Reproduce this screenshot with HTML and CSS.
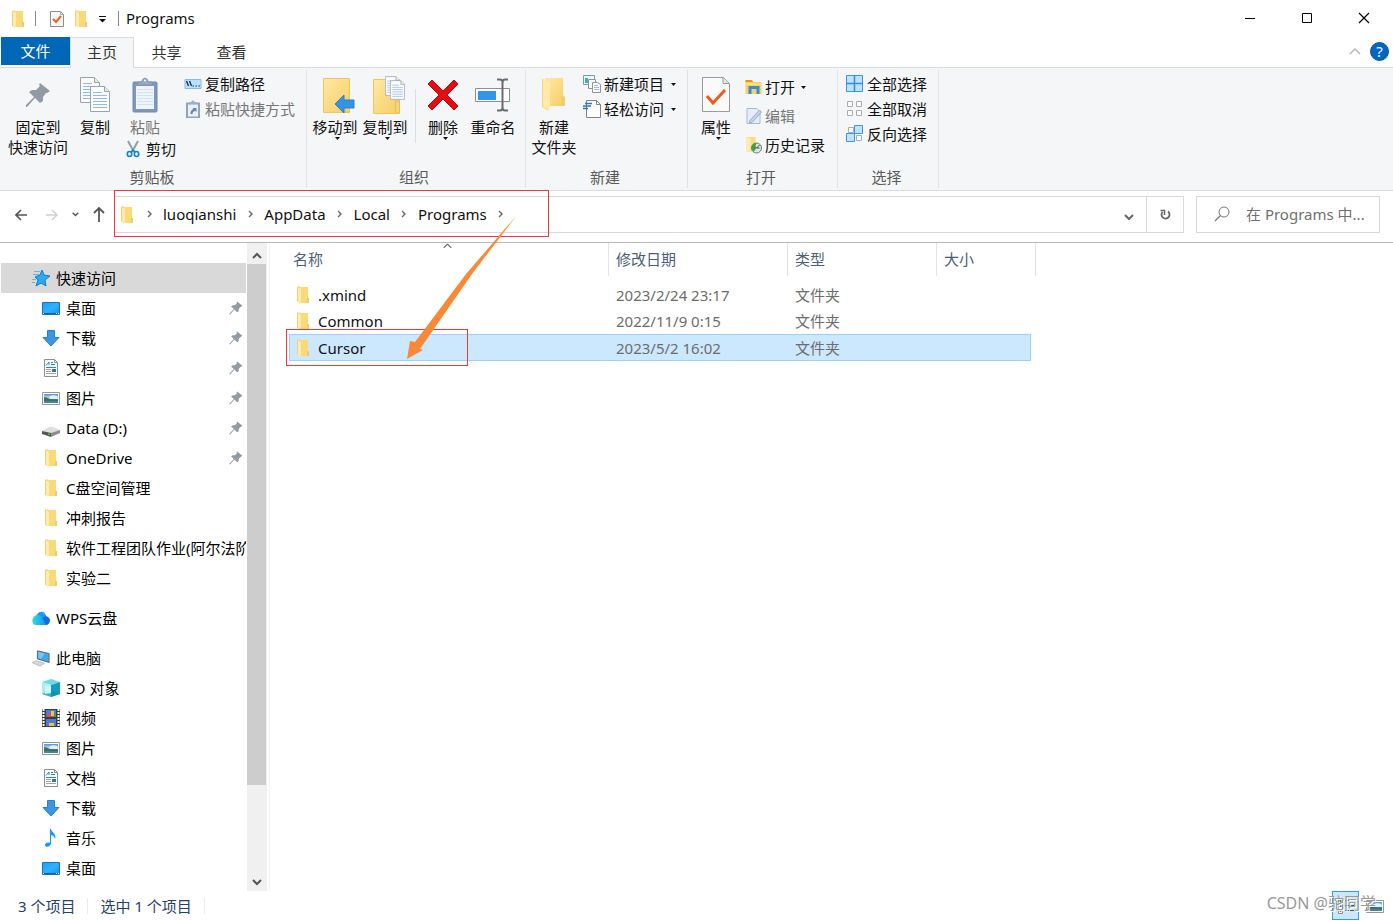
FILE: index.html
```html
<!DOCTYPE html>
<html lang="zh-CN">
<head>
<meta charset="utf-8">
<title>Programs</title>
<link rel="stylesheet" href="styles.css">
</head>
<body>
<svg class="sprite" aria-hidden="true">
  <defs>
    <linearGradient id="g-folder" x1="0" y1="0" x2="1" y2="1"><stop offset="0" stop-color="#ffe9a6"/><stop offset="1" stop-color="#f6cd63"/></linearGradient>
    <linearGradient id="g-blue" x1="0" y1="0" x2="1" y2="1"><stop offset="0" stop-color="#17a2fb"/><stop offset=".5" stop-color="#33b0ff"/><stop offset="1" stop-color="#0a94f5"/></linearGradient>
    <linearGradient id="g-cloud" x1="0" y1="0" x2="1" y2="0"><stop offset="0" stop-color="#2be0e0"/><stop offset="1" stop-color="#1590f5"/></linearGradient>
    <linearGradient id="g-sky" x1="0" y1="0" x2="0" y2="1"><stop offset="0" stop-color="#4d8fdc"/><stop offset=".5" stop-color="#d5edfb"/><stop offset=".6" stop-color="#4a7b6a"/><stop offset="1" stop-color="#3f87b5"/></linearGradient>
  </defs>
  <symbol id="folder" viewBox="0 0 14 18">
    <path d="M3 1h9v11l1 1v4H3z" fill="#f9d978"/><path d="M11 12h2v5h-2z" fill="#f3cb62"/>
    <path d="M1 1h1l3 2v12l-1 3-3-2z" fill="#ffebb0"/><path d="M1.500 1v15M1 1h3" stroke="#f2d078" fill="none"/>
  </symbol>
  <symbol id="folder-big" viewBox="0 0 26 36">
    <path d="M4 1h18v17l2 2v9H7z" fill="url(#g-folder)"/><path d="M20 19l4 1v9h-4z" fill="#f4cd68"/>
    <path d="M1 1l8 5v24l-2 4-6-4z" fill="#ffeaaa"/><path d="M1.500 2v27l5 4" stroke="#f5d582" fill="none"/>
  </symbol>
  <symbol id="pin" viewBox="0 0 26 26">
    <path d="M15 1l10 8-3 2-1 0-3 4 0 4-3 2-5-5-8 9-1 0 0-2 8-8-5-5 3-2 4 0 4-4-1-1z" fill="#919ba3"/>
  </symbol>
  <symbol id="check-page" viewBox="0 0 14 18">
    <path d="M.5 1.500h10l3 3v12H.5z" fill="#f7f7f7" stroke="#8e8e8e"/><path d="M10.500 1.500v3h3" fill="none" stroke="#aaa"/>
    <path d="M3 9l3 3 5-6" fill="none" stroke="#ec6325" stroke-width="2"/>
  </symbol>
  <symbol id="check-big" viewBox="0 0 28 36">
    <path d="M.5.500h21l6 6v28H.5z" fill="#fafafa" stroke="#9b9b9b"/><path d="M21 .5v6h6" fill="#e6e6e6" stroke="#9b9b9b"/>
    <path d="M5 19l6 7L23 13" fill="none" stroke="#ee5a1c" stroke-width="3"/>
  </symbol>
  <symbol id="page" viewBox="0 0 20 26">
    <path d="M.5.500h14l5 5v20H.5z" fill="#fbfcff" stroke="#9ba3ab"/><path d="M14.500.500v5h5" fill="#e6eaef" stroke="#9ba3ab"/>
    <path d="M3 6.500h9M3 9.500h14M3 12.500h14M3 15.500h14M3 18.500h14M3 21.500h14" stroke="#8fb9f2"/>
  </symbol>
  <symbol id="copy" viewBox="0 0 30 36">
    <use href="#page" width="20" height="26"/><use href="#page" x="10" y="9" width="20" height="26"/>
  </symbol>
  <symbol id="paste" viewBox="0 0 26 36">
    <rect x="1" y="5" width="24" height="30" rx="1" fill="#7d97bd" stroke="#7389ab"/><path d="M4 9h18v23H4z" fill="#eff5ff"/>
    <path d="M5 12.500h16M5 15.500h16M5 18.500h16M5 21.500h16M5 24.500h16M5 27.500h16" stroke="#d3e1f6"/>
    <path d="M6 8V5h4c0-5 6-5 6 0h4v3z" fill="#93a9c9" stroke="#8095b5"/><circle cx="13" cy="3.500" r="1" fill="#fff"/>
  </symbol>
  <symbol id="scissors" viewBox="0 0 14 18">
    <path d="M2 1l6 11M12 1L6 12" stroke="#93a0aa" stroke-width="2" fill="none"/>
    <ellipse cx="3.500" cy="14" rx="2.200" ry="2.500" fill="none" stroke="#1583c4" stroke-width="1.600"/><ellipse cx="10.500" cy="14" rx="2.200" ry="2.500" fill="none" stroke="#1583c4" stroke-width="1.600"/>
    <path d="M5 12l2-2 2 2" stroke="#1583c4" stroke-width="1.500" fill="none"/>
  </symbol>
  <symbol id="path" viewBox="0 0 17 18">
    <path d="M.5 4.500h16v9H.5z" fill="#b8e2fb" stroke="#8fbbd8"/><path d="M2 6l2 5M5 6l2 5" stroke="#17395b" stroke-width="1.400"/><path d="M8 11h1.500M11 11h1.500M14 11h1.500" stroke="#17395b"/>
  </symbol>
  <symbol id="shortcut" viewBox="0 0 17 18">
    <path d="M2.500 3.500h12v14h-12z" fill="#e9f0fa" stroke="#8fa3c2" stroke-width="2"/><path d="M5 4V2h2c0-2 3-2 3 0h2v2z" fill="#9db0cc"/>
    <path d="M6 14c0-3 1-4 3-5l-1-1h4v4l-1-1c-2 0-3 1-3 3z" fill="#6583ad"/>
  </symbol>
  <symbol id="move-to" viewBox="0 0 32 36">
    <path d="M.5 1.500h26v34H.5z" fill="url(#g-folder)" stroke="#ecc75f"/><path d="M22.500 24h4v11h-4z" fill="#f6d475" stroke="#e8c04e"/>
    <path d="M12 27l9-9v5h10v8H21v5z" fill="#3594e2" stroke="#2a82cd"/>
  </symbol>
  <symbol id="copy-to" viewBox="0 0 32 38">
    <path d="M.5 3.500h26v34H.5z" fill="url(#g-folder)" stroke="#ecc75f"/><path d="M22.500 25h4v12h-4z" fill="#f6d475" stroke="#e8c04e"/>
    <use href="#page" x="12" y="0" width="15" height="20"/><use href="#page" x="17" y="4" width="15" height="20"/>
  </symbol>
  <symbol id="delete" viewBox="0 0 32 32">
    <path d="M5 1l11 11L27 1l4 4-11 11 11 11-4 4-11-11L5 31l-4-4 11-11L1 5z" fill="#e30d13" stroke="#b90d12"/>
  </symbol>
  <symbol id="rename" viewBox="0 0 36 34">
    <path d="M.5 10.500h34v13H.5z" fill="#fff" stroke="#8b8f94"/><path d="M3 13h18v9H3z" fill="#3096e8"/>
    <path d="M22 1.500h3q2.500 0 2.500 3v25q0 3-2.500 3h-3M33 1.500h-3q-2.500 0-2.500 3v25q0 3 2.500 3h3" fill="none" stroke="#686c70" stroke-width="2"/>
  </symbol>
  <symbol id="new-item" viewBox="0 0 18 18">
    <path d="M.5.500h11v9H.5z" fill="#eef8ff" stroke="#6b9dbc" /><path d="M2 3h3v5H2z" fill="#49a5d8"/>
    <path d="M5.500 4.500h7v9h-7z" fill="#f8f8f8" stroke="#8e9499"/><path d="M9.500 7.500h5l3 2v8h-8z" fill="#fff" stroke="#8e9499"/><path d="M11 10.500h4M11 12.500h5M11 14.500h5" stroke="#93b9e8"/>
  </symbol>
  <symbol id="easy" viewBox="0 0 18 18">
    <path d="M3.500.500h10l4 4v13h-14z" fill="#fdfdfd" stroke="#828282"/><path d="M13.500.500v4h4" fill="none" stroke="#828282"/>
    <path d="M2 3.500h7M0 6h8M0 8.500h5" stroke="#3278b5" stroke-width="1.600"/>
  </symbol>
  <symbol id="open" viewBox="0 0 17 18">
    <path d="M0 2h6l2 2h8v12H0z" fill="#fbd15c"/><path d="M0 2h6l2 2H0z" fill="#d99c16"/><path d="M0 5h16v2H0z" fill="#ffe28a"/>
    <path d="M4.500 16V9.500h8V16" fill="none" stroke="#318edb" stroke-width="3"/>
  </symbol>
  <symbol id="edit" viewBox="0 0 17 18">
    <path d="M1.500 1.500h10l3 3v12h-13z" fill="#e5eefc" stroke="#a8b9d3"/><path d="M4 14L14 3l2 2L7 15l-3 1z" fill="#c5d2e8" stroke="#9caec9"/>
  </symbol>
  <symbol id="history" viewBox="0 0 17 18">
    <path d="M1 1h9v14l-9 1z" fill="#fbdc82"/><path d="M1 1l4 2v12l-4 1z" fill="#ffeaae"/>
    <circle cx="11" cy="12" r="5" fill="#dfe6df" stroke="#6f7b72"/><path d="M6 12c0-3 2-5 5-5l-1 3 1 2-3 4z" fill="#35a244"/><path d="M11 12l3-3M11 12h3" stroke="#444"/>
  </symbol>
  <symbol id="sel-all" viewBox="0 0 18 18">
    <path d="M.5.500h16v16H.5z" fill="#bfe2ff" stroke="#3a98e0"/><path d="M8.500 0v17M0 8.500h17" stroke="#2e8fdc" stroke-width="1.500"/>
  </symbol>
  <symbol id="sel-none" viewBox="0 0 18 18">
    <path d="M1.500 1.500h5v5h-5zM10.500 1.500h5v5h-5zM1.500 10.500h5v5h-5zM10.500 10.500h5v5h-5z" fill="#fff" stroke="#adadad"/>
  </symbol>
  <symbol id="sel-inv" viewBox="0 0 18 18">
    <path d="M2.500 2.500h5v5h-5zM10.500 10.500h5v5h-5z" fill="#fff" stroke="#adadad"/><path d="M8.500.500h8v8h-8zM.5 8.500h8v8h-8z" fill="#bfe2ff" stroke="#3a98e0"/>
  </symbol>
  <symbol id="star" viewBox="0 0 18 18">
    <path d="M10 1l2 5 6 1-5 4 1 6-5-3-5 3 2-6-3-3 5-2z" fill="#2fa8f3" stroke="#0d7fcb"/><path d="M2 2.500h6M1 5.500h6M0 10.500h4M0 13.500h3" stroke="#58b8ef"/>
  </symbol>
  <symbol id="desktop" viewBox="0 0 18 18">
    <path d="M.5 3.500h17v12H.5z" fill="url(#g-blue)" stroke="#1378b9"/><path d="M2 14.500h12M15 14.500h1" stroke="#0567a5"/><path d="M1 14.500h1M14 14.500h1M16 14.500h1" stroke="#fff"/>
  </symbol>
  <symbol id="download" viewBox="0 0 18 18">
    <path d="M5.500 1.500h7v7h4.500L9 17 1 8.500h4.500z" fill="#3b97e6" stroke="#2a7fc9"/>
  </symbol>
  <symbol id="document" viewBox="0 0 18 18">
    <path d="M2.500.500h10l3 3v14h-13z" fill="#fdfdfd" stroke="#8a8f93"/><path d="M12.500.500v3h3" stroke="#8a8f93" fill="none"/>
    <path d="M4 6.500l3-3.500v3M9 3.500h2M9 5.500h4M4 8.500h10" stroke="#1f8ad2" fill="none"/><path d="M4 10.500h5M4 12.500h5M4 14.500h10" stroke="#a3a3a3"/><path d="M10 10h4v3h-4z" fill="#2e77ae"/>
  </symbol>
  <symbol id="picture" viewBox="0 0 18 18">
    <path d="M.5 3.500h17v12H.5z" fill="#fff" stroke="#969696"/><path d="M2 5h14v9H2z" fill="url(#g-sky)"/><path d="M2 8c4 0 6 3 10 3h4v1H2z" fill="#3e715d"/><path d="M7 8c2-2 5-2 8-1v2c-3 1-5 1-8-1z" fill="#e5f4fa"/>
  </symbol>
  <symbol id="drive" viewBox="0 0 18 18">
    <path d="M0 12l7-4h4l7 3-9 4z" fill="#dedede"/><path d="M0 12l9 2v4l-9-3z" fill="#555"/><path d="M9 14l9-3v3l-9 4z" fill="#8d8d8d"/><path d="M6 14.500h2v1.500H6z" fill="#3bd13e"/>
  </symbol>
  <symbol id="cloud" viewBox="0 0 18 18">
    <path d="M5 6a5 5 0 0 1 9 1c3 1 4 3 4 4 0 3-2 5-4 5H6z" fill="#0e6de8"/><path d="M5 6c2-5 8-4 9 1l-6 3z" fill="#1c9cf4"/><path d="M5 6c3 0 4 1 6 4l3 6H4c-5 0-5-9 1-10z" fill="url(#g-cloud)"/>
  </symbol>
  <symbol id="computer" viewBox="0 0 20 18">
    <path d="M6 1l13 3v10L6 10z" fill="#44a6e8" stroke="#55616b"/><path d="M7 2l7 2-4 6-3-1z" fill="#76c4f4"/><path d="M0 14l5-2 9 3-5 3z" fill="#d5dadd" stroke="#b4bbc0"/>
  </symbol>
  <symbol id="cube" viewBox="0 0 18 18">
    <path d="M0 3l9-3 9 3-9 3z" fill="#6fd9e8"/><path d="M0 3l9 3v12l-9-3z" fill="#a5ecf3"/><path d="M18 3L9 6v12l9-3z" fill="#139dbb"/><path d="M0 15l9-4 9 4-9 3z" fill="#0d8daa" opacity=".65"/><path d="M3 6l6 1v7l-6 1z" fill="#c9f7fa"/>
  </symbol>
  <symbol id="video" viewBox="0 0 18 18">
    <path d="M0 0h18v18H0z" fill="#3c3c3c"/><path d="M4 1h10v7H4zM4 10h10v7H4z" fill="#4a7cd8"/><path d="M1.500 0v18M16.500 0v18" stroke="#fff" stroke-width="2" stroke-dasharray="2 1"/>
    <path d="M5 5h5v3H5z" fill="#e64f3d"/><path d="M9 2h3v5H9z" fill="#f4c23c"/><path d="M12 5h2v3h-2z" fill="#479c3b"/><path d="M7 14h5v3H7z" fill="#f4c23c"/>
  </symbol>
  <symbol id="music" viewBox="0 0 18 18">
    <path d="M8 0h1c1 4 6 5 4 10-1-3-2-4-4-4v8c0 4-6 5-6 2 0-2 3-3 5-2z" fill="#109af5"/>
  </symbol>
  <symbol id="caret" viewBox="0 0 5 3"><path d="M0 0h5L2.500 3z" fill="#111"/></symbol>
  <symbol id="chev-r" viewBox="0 0 5 8"><path d="M1 1l3 3-3 3" fill="none" stroke="#666" stroke-width="1.400"/></symbol>
  <symbol id="chev-d" viewBox="0 0 10 7"><path d="M1 1l4 4 4-4" fill="none" stroke="currentColor" stroke-width="2"/></symbol>
  <symbol id="chev-u" viewBox="0 0 12 7"><path d="M1 6l5-5 5 5" fill="none" stroke="currentColor" stroke-width="1.500"/></symbol>
  <symbol id="arrow-l" viewBox="0 0 12 12"><path d="M12 6H1M6 1L1 6l5 5" fill="none" stroke="currentColor" stroke-width="1.600"/></symbol>
  <symbol id="arrow-r" viewBox="0 0 12 12"><path d="M0 6h11M6 1l5 5-5 5" fill="none" stroke="currentColor" stroke-width="1.500"/></symbol>
  <symbol id="arrow-u" viewBox="0 0 12 15"><path d="M6 15V1M1 6l5-5 5 5" fill="none" stroke="currentColor" stroke-width="1.800"/></symbol>
</svg>

<div class="window">
  <header class="titlebar">
    <svg class="i14"><use href="#folder"/></svg><span class="bar"></span>
    <button class="quick check" aria-label="属性"><svg class="i14"><use href="#check-page"/></svg></button>
    <button class="quick" aria-label="新建文件夹"><svg class="i14"><use href="#folder"/></svg></button>
    <button class="quick more" aria-label="自定义快速访问工具栏"><svg width="7" height="7" viewBox="0 0 7 7"><path d="M0 .5h7" stroke="#111"/><path d="M0 3h7L3.500 6.500z" fill="#111"/></svg></button>
    <span class="bar"></span>
    <h1 class="title">Programs</h1>
    <div class="win-controls">
      <button aria-label="最小化"><svg width="12" height="12"><path d="M1 6.500h10" stroke="#000"/></svg></button>
      <button aria-label="最大化"><svg width="12" height="12"><path d="M1.500 1.500h9v9h-9z" fill="none" stroke="#000"/></svg></button>
      <button aria-label="关闭"><svg width="12" height="12"><path d="M1 1l10 10M11 1L1 11" stroke="#000" stroke-width="1.200"/></svg></button>
    </div>
  </header>

  <nav class="tabs">
    <button class="tab file">文件</button>
    <button class="tab active">主页</button>
    <button class="tab">共享</button>
    <button class="tab">查看</button>
    <span class="tab-tools">
      <button class="collapse" aria-label="最小化功能区"><svg width="12" height="7"><use href="#chev-u"/></svg></button>
      <button class="help" aria-label="帮助">?</button>
    </span>
  </nav>

  <section class="ribbon">
    <div class="group g-clip">
      <div class="tools">
        <button class="big wide"><span class="pic"><svg width="26" height="26"><use href="#pin"/></svg></span>固定到<br>快速访问</button>
        <button class="big narrow"><span class="pic"><svg width="30" height="36"><use href="#copy"/></svg></span>复制</button>
        <div class="paste-col">
          <button class="big off"><span class="pic"><svg width="26" height="36"><use href="#paste"/></svg></span>粘贴</button>
          <button class="small cut"><svg class="i14"><use href="#scissors"/></svg>剪切</button>
        </div>
        <div class="stack">
          <button class="small"><svg class="i17"><use href="#path"/></svg>复制路径</button>
          <button class="small off"><svg class="i17"><use href="#shortcut"/></svg>粘贴快捷方式</button>
        </div>
      </div>
      <h2>剪贴板</h2>
    </div>
    <div class="group g-org">
      <div class="tools">
        <button class="big"><span class="pic lean"><svg width="32" height="36"><use href="#move-to"/></svg></span>移动到<svg class="caret"><use href="#caret"/></svg></button>
        <button class="big"><span class="pic lean"><svg width="32" height="38"><use href="#copy-to"/></svg></span>复制到<svg class="caret"><use href="#caret"/></svg></button>
        <span class="split"></span>
        <button class="big"><span class="pic"><svg width="32" height="32"><use href="#delete"/></svg></span>删除<svg class="caret"><use href="#caret"/></svg></button>
        <button class="big"><span class="pic"><svg width="36" height="34"><use href="#rename"/></svg></span>重命名</button>
      </div>
      <h2>组织</h2>
    </div>
    <div class="group g-new">
      <div class="tools">
        <button class="big"><span class="pic"><svg width="26" height="36"><use href="#folder-big"/></svg></span>新建<br>文件夹</button>
        <div class="stack">
          <button class="small"><svg class="i17"><use href="#new-item"/></svg>新建项目<svg class="caret"><use href="#caret"/></svg></button>
          <button class="small"><svg class="i17"><use href="#easy"/></svg>轻松访问<svg class="caret"><use href="#caret"/></svg></button>
        </div>
      </div>
      <h2>新建</h2>
    </div>
    <div class="group g-open">
      <div class="tools">
        <button class="big"><span class="pic"><svg width="28" height="36"><use href="#check-big"/></svg></span>属性<svg class="caret"><use href="#caret"/></svg></button>
        <div class="stack roomy">
          <button class="small"><svg class="i17"><use href="#open"/></svg>打开<svg class="caret"><use href="#caret"/></svg></button>
          <button class="small off"><svg class="i17"><use href="#edit"/></svg>编辑</button>
          <button class="small"><svg class="i17"><use href="#history"/></svg>历史记录</button>
        </div>
      </div>
      <h2>打开</h2>
    </div>
    <div class="group g-sel">
      <div class="tools">
        <div class="stack">
          <button class="small"><svg class="i17"><use href="#sel-all"/></svg>全部选择</button>
          <button class="small"><svg class="i17"><use href="#sel-none"/></svg>全部取消</button>
          <button class="small"><svg class="i17"><use href="#sel-inv"/></svg>反向选择</button>
        </div>
      </div>
      <h2>选择</h2>
    </div>
  </section>

  <div class="locator">
    <div class="history-nav">
      <button aria-label="返回"><svg width="12" height="12"><use href="#arrow-l"/></svg></button>
      <button class="dim" aria-label="前进"><svg width="12" height="12"><use href="#arrow-r"/></svg></button>
      <button class="slim" aria-label="最近浏览的位置"><svg width="7" height="5"><use href="#chev-d"/></svg></button>
      <button aria-label="上移"><svg width="12" height="15"><use href="#arrow-u"/></svg></button>
    </div>
    <div class="address">
      <svg class="i14"><use href="#folder"/></svg>
      <span class="sep"><svg width="5" height="8"><use href="#chev-r"/></svg></span><a href="#">luoqianshi</a>
      <span class="sep"><svg width="5" height="8"><use href="#chev-r"/></svg></span><a href="#">AppData</a>
      <span class="sep"><svg width="5" height="8"><use href="#chev-r"/></svg></span><a href="#">Local</a>
      <span class="sep"><svg width="5" height="8"><use href="#chev-r"/></svg></span><a href="#">Programs</a>
      <span class="sep"><svg width="5" height="8"><use href="#chev-r"/></svg></span>
      <button class="drop" aria-label="以前的位置"><svg width="10" height="7"><use href="#chev-d"/></svg></button>
      <button class="refresh" aria-label="刷新"><svg width="12" height="12" viewBox="0 0 12 12"><path d="M9 2.500a4 4 0 1 1-5.500.5" fill="none" stroke="#666" stroke-width="1.800"/><path d="M1.500 1.500H5.500V6" fill="none" stroke="#666" stroke-width="1.500"/></svg></button>
      <span class="mark mark-address"></span>
    </div>
    <label class="search">
      <svg width="16" height="16" viewBox="0 0 16 16"><circle cx="10" cy="6" r="5" fill="none" stroke="#777"/><path d="M6.500 9.500L1 15" stroke="#777" stroke-width="1.200"/></svg>
      <input type="search" aria-label="搜索" placeholder="在 Programs 中...">
    </label>
  </div>

  <main class="content">
    <nav class="tree">
      <a class="root current" href="#"><svg><use href="#star"/></svg><span>快速访问</span></a>
      <a href="#"><svg><use href="#desktop"/></svg><span>桌面</span><svg class="pinned"><use href="#pin"/></svg></a>
      <a href="#"><svg><use href="#download"/></svg><span>下载</span><svg class="pinned"><use href="#pin"/></svg></a>
      <a href="#"><svg><use href="#document"/></svg><span>文档</span><svg class="pinned"><use href="#pin"/></svg></a>
      <a href="#"><svg><use href="#picture"/></svg><span>图片</span><svg class="pinned"><use href="#pin"/></svg></a>
      <a href="#"><svg><use href="#drive"/></svg><span>Data (D:)</span><svg class="pinned"><use href="#pin"/></svg></a>
      <a href="#"><svg><use href="#folder"/></svg><span>OneDrive</span><svg class="pinned"><use href="#pin"/></svg></a>
      <a href="#"><svg><use href="#folder"/></svg><span>C盘空间管理</span></a>
      <a href="#"><svg><use href="#folder"/></svg><span>冲刺报告</span></a>
      <a href="#"><svg><use href="#folder"/></svg><span>软件工程团队作业(阿尔法阶</span></a>
      <a href="#"><svg><use href="#folder"/></svg><span>实验二</span></a>
      <a class="root spaced" href="#"><svg><use href="#cloud"/></svg><span>WPS云盘</span></a>
      <a class="root spaced" href="#"><svg><use href="#computer"/></svg><span>此电脑</span></a>
      <a href="#"><svg><use href="#cube"/></svg><span>3D 对象</span></a>
      <a href="#"><svg><use href="#video"/></svg><span>视频</span></a>
      <a href="#"><svg><use href="#picture"/></svg><span>图片</span></a>
      <a href="#"><svg><use href="#document"/></svg><span>文档</span></a>
      <a href="#"><svg><use href="#download"/></svg><span>下载</span></a>
      <a href="#"><svg><use href="#music"/></svg><span>音乐</span></a>
      <a href="#"><svg><use href="#desktop"/></svg><span>桌面</span></a>
    </nav>
    <div class="scrollbar">
      <button aria-label="向上滚动"><svg width="10" height="7"><use href="#chev-d" transform="rotate(180 5 3.500)"/></svg></button>
      <div class="track"><div class="thumb"></div></div>
      <button aria-label="向下滚动"><svg width="10" height="7"><use href="#chev-d"/></svg></button>
    </div>
    <section class="files">
      <table>
        <colgroup><col class="c-name"><col class="c-date"><col class="c-type"><col class="c-size"></colgroup>
        <thead><tr><th>名称<svg class="sort" width="9" height="6" viewBox="0 0 12 7"><use href="#chev-u"/></svg></th><th>修改日期</th><th>类型</th><th>大小</th></tr></thead>
        <tbody>
          <tr><td><span class="name"><svg class="i14"><use href="#folder"/></svg>.xmind</span></td><td>2023/2/24 23:17</td><td>文件夹</td><td></td></tr>
          <tr><td><span class="name"><svg class="i14"><use href="#folder"/></svg>Common</span></td><td>2022/11/9 0:15</td><td>文件夹</td><td></td></tr>
          <tr class="selected"><td><span class="name"><svg class="i14"><use href="#folder"/></svg>Cursor</span><span class="mark mark-row"></span></td><td>2023/5/2 16:02</td><td>文件夹</td><td></td></tr>
        </tbody>
      </table>
    </section>
  </main>

  <footer class="status">
    <span class="count">3 个项目</span><span class="count">选中 1 个项目</span>
    <div class="views">
      <button class="on" aria-label="详细信息"><svg width="18" height="18"><path d="M1.500 1.500h4v15h-4z" fill="#fff" stroke="#888"/><path d="M2.500 3h2v2h-2z" fill="#55883a"/><path d="M2.500 8h2v2h-2z" fill="#3a74b6"/><path d="M2.500 13h2v2h-2z" fill="#b54330"/><path d="M8 3.500h4M13 3.500h4M8 8.500h4M13 8.500h4M8 13.500h4M13 13.500h4" stroke="#555"/></svg></button>
      <button aria-label="大图标"><svg width="18" height="18"><use href="#picture"/></svg></button>
    </div>
    <span class="watermark">CSDN @驼同学</span>
  </footer>

  <svg class="pointer" width="118" height="146" viewBox="0 0 118 146" aria-hidden="true"><path d="M117 1L72 60 20 135l3 1-16 9 3-18 5 1L66 60z" fill="#fa8937"/></svg>
</div>
</body>
</html>
```
FILE: styles.css
```css
* { box-sizing: border-box; }
body {
  margin: 0;
  font: 15px/20px "Noto Sans", "Noto Sans CJK SC", sans-serif;
  color: #111;
  background: #fff;
}
button { font: inherit; color: inherit; background: none; border: 0; padding: 0; margin: 0; }
a { color: inherit; text-decoration: none; }
h1, h2 { margin: 0; font: inherit; }
svg { flex: none; }
.sprite { position: absolute; width: 0; height: 0; }
.i14 { width: 14px; height: 18px; }
.i17 { width: 18px; height: 18px; }

.window { position: relative; display: flex; flex-direction: column; height: 100vh; min-width: 1100px; overflow: hidden; }

.titlebar { display: flex; align-items: center; height: 37px; padding: 0 1px 0 11px; }
.bar { width: 1px; height: 15px; margin: 0 10px; background: #8a8a8a; }
.quick { display: flex; }
.check { margin: 0 10px 0 4px; }
.more { margin: 2px 2px 0 11px; }
.title { margin-left: -3px; padding-bottom: 2px; flex: 1; }
.win-controls { display: flex; }
.win-controls button { display: grid; place-items: center; width: 57px; height: 37px; padding-bottom: 2px; }

.tabs { display: flex; height: 31px; padding-left: 1px; border-bottom: 1px solid #dadbdc; }
.tab { width: 65px; height: 30px; padding-bottom: 1px; color: #333; }
.tab.file { width: 69px; height: 28px; background: #0066b6; color: #fff; }
.tab.active { width: 64px; height: 31px; padding: 0 0 2px; background: #f5f6f7; border: 1px solid #dadbdc; border-bottom: 0; }
.tab-tools { display: flex; align-items: center; gap: 9px; margin-left: auto; padding: 0 4px 2px 0; }
.collapse { display: flex; color: #b9b9b9; }
.help { width: 19px; height: 19px; border-radius: 50%; border: 1px solid #155590; background: #0067c5; color: #fff; line-height: 17px; }

.ribbon { display: flex; height: 123px; background: #f5f6f7; border-bottom: 1px solid #dadbdc; }
.group { display: flex; flex-direction: column; justify-content: space-between; position: relative; padding: 4px 0 3px; }
.group::after { content: ""; position: absolute; right: 0; top: 2px; bottom: 2px; width: 1px; background: #e1e2e4; }
.group h2 { margin-right: 4px; text-align: center; color: #5a5a5a; }
.tools { display: flex; align-items: flex-start; }
.g-clip { width: 307px; padding-left: 1px; }
.g-org { width: 219px; padding-left: 3px; }
.g-new { width: 162px; padding-left: 0; }
.g-open { width: 150px; padding-left: 3px; }
.g-sel { width: 101px; padding-left: 8px; }
.g-org h2 { margin-right: 8px; }
.g-open h2 { margin-right: 7px; }
.g-sel h2 { margin-right: 12px; }
.big { position: relative; width: 50px; padding-top: 2px; text-align: center; white-space: nowrap; }
.big .pic { display: grid; place-items: center; height: 43px; padding-bottom: 2px; }
.big .lean { padding-left: 7px; }
.big .caret { position: absolute; left: 50%; bottom: -3px; }
.big.wide { width: 74px; }
.big.narrow { width: 40px; }
.g-new .big { width: 56px; }
.g-clip .paste-col { width: 60px; margin: 0 4px 0 5px; }
.caret { width: 5px; height: 3px; }
.off { color: #777; }
.small { display: flex; align-items: center; gap: 3px; height: 25px; padding-bottom: 1px; white-space: nowrap; }
.small .caret { margin-left: 4px; }
.cut { padding-left: 6px; gap: 6px; }
.stack { display: grid; }
.g-new .stack { padding-left: 1px; }
.roomy { padding: 3px 0 0 4px; gap: 4px; }
.roomy .small { gap: 2px; }
.split { width: 1px; height: 54px; margin: 17px 2px 0 5px; background: #dcdde0; }

.locator { display: flex; height: 52px; padding: 5px 13px 9px 5px; border-bottom: 1px solid #b9b9b9; }
.history-nav { display: flex; width: 109px; color: #555; }
.history-nav button { display: grid; place-items: center; width: 31px; }
.history-nav .slim { width: 16px; }
.history-nav .dim { color: #d0d0d0; }
.address { position: relative; display: flex; flex: 1; align-items: center; padding-left: 5px; border: 1px solid #d9d9d9; }
.address a { padding-bottom: 2px; }
.sep { display: grid; place-items: center; width: 28px; padding-bottom: 1px; }
.address .i14 + .sep { margin-left: 1px; }
.drop { margin-left: auto; width: 34px; color: #666; }
.refresh { display: grid; place-items: center; width: 37px; height: 35px; border-left: 1px solid #d9d9d9; }
.search { display: flex; align-items: center; gap: 16px; width: 184px; margin-left: 12px; padding: 0 0 2px 17px; border: 1px solid #d9d9d9; }
.search input { flex: 1; min-width: 0; padding: 0; border: 0; outline: 0; font: inherit; background: none; }
.search input::placeholder { color: #707070; opacity: 1; }

.mark { position: absolute; border: 1px solid #f0373a; pointer-events: none; }
.mark-address { left: -1px; top: -7px; width: 435px; height: 47px; }
.mark-row { left: -4px; top: -6px; width: 182px; height: 37px; }
.pointer { position: absolute; left: 400px; top: 214px; pointer-events: none; }

.content { display: flex; flex: 1; min-height: 0; }
.tree { width: 246px; padding: 20px 0 0 1px; overflow: hidden; }
.tree a { display: flex; align-items: center; gap: 6px; height: 30px; padding-left: 41px; white-space: nowrap; color: #000; }
.tree .root { padding-left: 31px; }
.tree .current { background: #d9d9d9; }
.tree .spaced { margin-top: 10px; }
.tree svg { width: 18px; height: 18px; }
.tree .pinned { width: 14px; height: 14px; margin: 0 3px 0 auto; }
.scrollbar { display: flex; flex-direction: column; width: 20px; margin-left: 1px; background: #f0f0f0; color: #555; }
.scrollbar button { height: 21px; padding-bottom: 4px; }
.track { flex: 1; }
.thumb { width: 19px; height: 86%; background: #cdcdcd; }

.files { flex: 1; margin-left: 2px; padding-left: 19px; border-left: 1px solid #f3f3f3; }
table { width: 742px; table-layout: fixed; border-collapse: separate; border-spacing: 0; }
.c-name { width: 320px; }
.c-date { width: 179px; }
.c-type { width: 149px; }
th { position: relative; height: 33px; padding: 0 0 2px 7px; text-align: left; font-weight: normal; color: #4c607a; }
th:first-child { padding-left: 4px; }
th::after { content: ""; position: absolute; right: 0; top: 0; bottom: 0; width: 1px; background: #e4e4e4; }
th:last-child::after { right: -5px; }
.sort { position: absolute; left: 154px; top: 0; color: #666; }
tbody::before { content: ""; display: block; height: 6px; }
td { position: relative; height: 26px; padding: 0 0 0 7px; border: 1px solid transparent; border-width: 1px 0; color: #6d6d6d; line-height: 24px; }
td:first-child { border-left-width: 1px; padding-left: 6px; color: #111; }
td:last-child { border-right-width: 1px; }
.name { display: flex; align-items: center; gap: 8px; }
.selected td { height: 27px; background: #cce8ff; border-color: #99d1ff; }

.status { position: relative; display: flex; align-items: center; height: 30px; padding: 0 5px 1px 18px; color: #24426b; }
.count { padding-right: 12px; margin-right: 12px; border-right: 1px solid #ececec; line-height: 16px; }
.views { display: flex; gap: 2px; margin-left: auto; }
.views button { display: grid; place-items: center; width: 27px; height: 29px; }
.views .on { background: #cce8f8; border: 1px solid #2f9fdf; }
.watermark { position: absolute; right: 17px; top: 2px; font-size: 16px; color: #999; text-shadow: 1px 1px 0 #fff; }
```
